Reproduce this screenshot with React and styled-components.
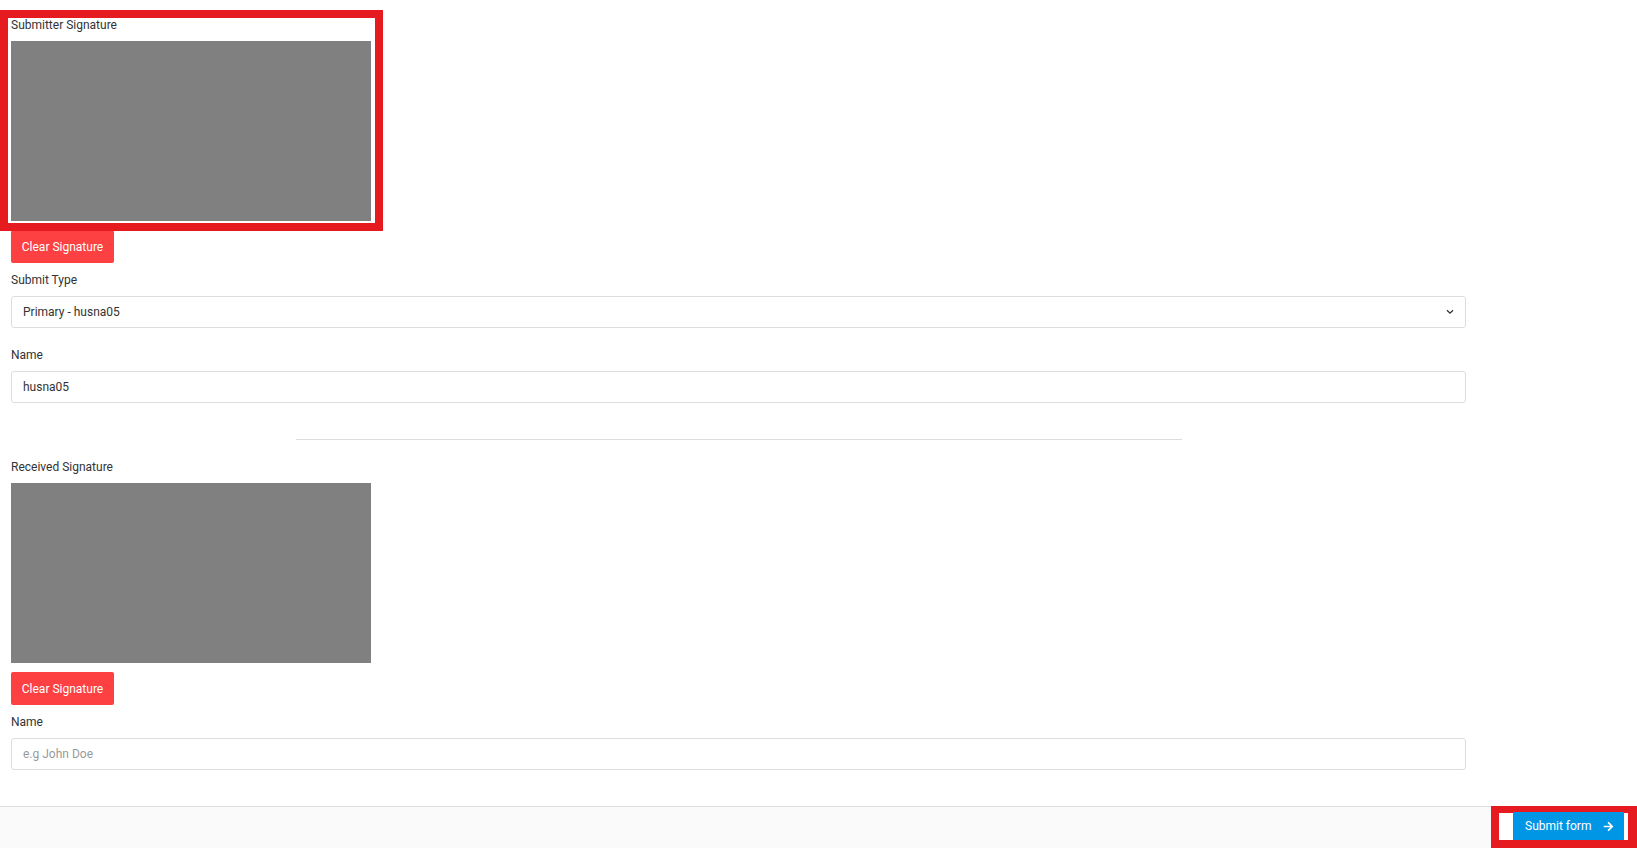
import React from "react";
import styled, { createGlobalStyle } from "styled-components";
import { FaArrowRight } from "react-icons/fa";

const GlobalStyle = createGlobalStyle`
    * { box-sizing: border-box; }
    html, body {
        margin: 0;
        padding: 0;
        background: #ffffff;
        font-family: Roboto, "Liberation Sans", Arial, sans-serif;
        color: #333333;
    }
`;

const Page = styled.div`
    display: flex;
    flex-direction: column;
    min-height: 848px;
`;

const Form = styled.form`
    display: flex;
    flex-direction: column;
    width: 1466px;
    padding: 18px 0 36px 11px;
`;

const Section = styled.div`
    position: relative;
    display: flex;
    flex-direction: column;
    margin-top: ${(p) => p.$top || 0}px;
`;

const Highlight = styled.div`
    position: absolute;
    left: -11px;
    top: -8px;
    width: 383px;
    height: 221px;
    border: 8px solid #e51b20;
    pointer-events: none;
`;

const Label = styled.label`
    display: block;
    font-size: 12px;
    line-height: 15px;
    color: #333333;
    margin-bottom: 8px;
`;

const SignaturePad = styled.div`
    width: 360px;
    height: 180px;
    background: #808080;
`;

const ClearButton = styled.button`
    align-self: flex-start;
    margin-top: 9px;
    width: 103px;
    height: 33px;
    padding: 0;
    border: none;
    border-radius: 2px;
    background: #fd4042;
    color: #ffffff;
    font-family: inherit;
    font-size: 12px;
    cursor: pointer;
`;

const SelectBox = styled.div`
    display: flex;
    align-items: center;
    justify-content: space-between;
    height: 32px;
    padding: 0 11px;
    border: 1px solid #dddddd;
    border-radius: 3px;
    font-size: 12px;
    color: #333333;
    background: #ffffff;
`;

const Input = styled.input`
    height: 32px;
    padding: 0 11px;
    border: 1px solid #dddddd;
    border-radius: 3px;
    font-family: inherit;
    font-size: 12px;
    color: #333333;
    background: #ffffff;
    outline: none;

    &::placeholder {
        color: #9a9a9a;
    }
`;

const Divider = styled.hr`
    width: 886px;
    margin: 36px auto 0;
    border: none;
    border-top: 1px solid #dddddd;
`;

const Footer = styled.footer`
    display: flex;
    justify-content: flex-end;
    height: 42px;
    margin-top: auto;
    background: #fafafa;
    border-top: 1px solid #dddddd;
`;

const FooterMark = styled.div`
    display: flex;
    align-items: stretch;
    height: 42px;
    margin-top: -1px;
    width: 146px;
    padding: 0 4px 0 14px;
    border: 8px solid #e51b20;
    border-top-width: 7px;
    border-right-width: 9px;
    background: #ffffff;
`;

const SubmitButton = styled.button`
    display: flex;
    align-items: center;
    gap: 12px;
    width: 111px;
    margin-top: -1px;
    padding: 0 0 0 12px;
    border: none;
    background: #0096e6;
    color: #ffffff;
    font-family: inherit;
    font-size: 12px;
    cursor: pointer;
`;

function Chevron(){
    return(
        <svg width="8" height="6" viewBox="0 0 8 6">
            <path d="M1 1.2 L4 4.2 L7 1.2" fill="none" stroke="#333" strokeWidth="1.3" />
        </svg>
    )
}

export default function App(){
    return(
        <Page>
            <GlobalStyle/>
            <Form onSubmit={(e) => e.preventDefault()}>
                <Section>
                    <Highlight/>
                    <Label>Submitter Signature</Label>
                    <SignaturePad/>
                    <ClearButton type="button">Clear Signature</ClearButton>
                </Section>

                <Section $top={10}>
                    <Label>Submit Type</Label>
                    <SelectBox>
                        <span>Primary - husna05</span>
                        <Chevron/>
                    </SelectBox>
                </Section>

                <Section $top={20}>
                    <Label>Name</Label>
                    <Input defaultValue="husna05"/>
                </Section>

                <Divider/>

                <Section $top={20}>
                    <Label>Received Signature</Label>
                    <SignaturePad/>
                    <ClearButton type="button">Clear Signature</ClearButton>
                </Section>

                <Section $top={10}>
                    <Label>Name</Label>
                    <Input placeholder="e.g John Doe"/>
                </Section>
            </Form>

            <Footer>
                <FooterMark>
                    <SubmitButton type="submit">
                        Submit form
                        <FaArrowRight size={11}/>
                    </SubmitButton>
                </FooterMark>
            </Footer>
        </Page>
    )
}
